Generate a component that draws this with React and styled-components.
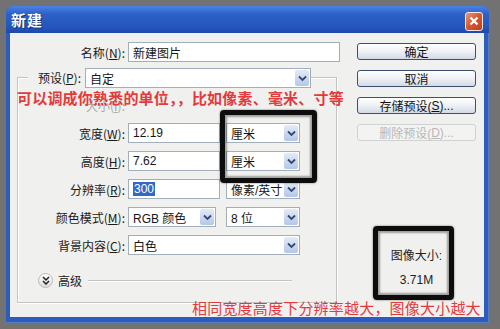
import React from "react";
import styled, { createGlobalStyle } from "styled-components";

const GlobalStyle = createGlobalStyle`
  html, body {
    margin: 0;
    padding: 0;
    background: #727272;
  }
  body {
    width: 500px;
    height: 329px;
    overflow: hidden;
    font-family: "Liberation Sans", "Noto Sans CJK SC", sans-serif;
  }
`;

const Window = styled.div`
  margin: 6px 0 0 6px;
  width: 483px;
  height: 317px;
  border-radius: 7px 7px 0 0;
  background: #2d5cc1;
  display: flex;
  flex-direction: column;
  overflow: hidden;
  box-shadow: inset -1px 0 0 #5b7cba, inset 0 -1px 0 #5b7cba;
`;

const TitleBar = styled.div`
  height: 27px;
  flex: none;
  display: flex;
  align-items: center;
  justify-content: space-between;
  padding: 0 6px 0 5px;
  background: linear-gradient(#4b82e2, #2d60c8 30%, #2455bd 80%, #1d48aa);
`;

const Title = styled.span`
  color: #fff;
  font-size: 15px;
  font-weight: bold;
  font-family: "Noto Sans CJK SC", sans-serif;
  text-shadow: 1px 1px 0 #10306e;
  letter-spacing: 1px;
`;

const Close = styled.div`
  width: 18px;
  height: 19px;
  margin-top: 3px;
  box-sizing: border-box;
  border: 1px solid #f4e6e0;
  border-radius: 3px;
  background: linear-gradient(135deg, #eb9677, #d5562f 50%, #bf3f1c);
  display: flex;
  align-items: center;
  justify-content: center;
`;

const Client = styled.div`
  position: relative;
  flex: 1;
  margin: 0 5px 6px 4px;
  background: #f0f0ef;
  display: flex;
  padding-top: 9px;
  box-sizing: border-box;
`;

const LeftCol = styled.div`
  width: 330px;
  display: flex;
  flex-direction: column;
`;

const RightCol = styled.div`
  width: 119px;
  margin-left: 17px;
  padding-top: 1px;
  display: flex;
  flex-direction: column;
  gap: 10px;
`;

const Row = styled.div`
  display: flex;
  align-items: center;
  height: 20px;
  margin-top: ${p => p.$mt || 0}px;
`;

const Label = styled.span`
  width: ${p => p.$w}px;
  flex: none;
  text-align: right;
  font-size: 12px;
  color: ${p => (p.$dim ? "#a8a8a8" : "#1a1a1a")};
  margin-right: 3px;
  white-space: nowrap;
  font-family: "Noto Sans CJK SC", sans-serif;
`;

const Field = styled.div`
  width: ${p => p.$w}px;
  height: 20px;
  flex: none;
  box-sizing: border-box;
  border: 1px solid #a3aebb;
  background: #fff;
  display: flex;
  align-items: center;
  padding-left: 4px;
  margin-left: ${p => p.$ml || 0}px;
  font-size: 12px;
  color: #151515;
  white-space: nowrap;
`;

const Arrow = styled.span`
  margin-left: auto;
  align-self: stretch;
  width: 14px;
  margin: 1px 1px 1px auto;
  border-radius: 2px;
  background: linear-gradient(#e3ebf8, #b4c7e8);
  display: flex;
  align-items: center;
  justify-content: center;
`;

const Selected = styled.span`
  background: #3169c6;
  color: #fff;
  padding: 0 1px;
`;

const GroupBox = styled.div`
  margin: 15px 0 0 7px;
  width: 320px;
  height: 226px;
  box-sizing: border-box;
  border: 1px solid #c4c4c2;
  box-shadow: inset 1px 1px 0 #fff, 1px 1px 0 #fff;
  display: flex;
  flex-direction: column;
`;

const PresetRow = styled.div`
  display: flex;
  align-items: center;
  height: 20px;
  margin: -10px 0 0 10px;
`;

const PresetLabel = styled.span`
  width: 57px;
  box-sizing: border-box;
  padding-right: 4px;
  text-align: right;
  background: #f0f0ef;
  font-size: 12px;
  color: #1a1a1a;
  font-family: "Noto Sans CJK SC", sans-serif;
  line-height: 20px;
`;

const AdvancedRow = styled.div`
  display: flex;
  align-items: center;
  height: 18px;
  margin-top: 16px;
  padding: 0 44px 0 20px;
  font-size: 12px;
  color: #1a1a1a;
  font-family: "Noto Sans CJK SC", sans-serif;
`;

const RoundButton = styled.span`
  width: 15px;
  height: 15px;
  border-radius: 50%;
  box-sizing: border-box;
  border: 1px solid #b9b9b9;
  background: linear-gradient(#ffffff, #dcdcdc);
  display: flex;
  align-items: center;
  justify-content: center;
  margin-right: 5px;
`;

const Rule = styled.span`
  flex: 1;
  height: 1px;
  margin-left: 6px;
  background: #c4c4c2;
  box-shadow: 0 1px 0 #fff;
`;

const Button = styled.div`
  height: 17px;
  box-sizing: border-box;
  border: 1px solid ${p => (p.$disabled ? "#cfd1d3" : "#3d4f6d")};
  border-radius: 3px;
  background: ${p =>
    p.$disabled ? "#f3f3f1" : "linear-gradient(#ffffff, #f0f2f6 45%, #d3dae6)"};
  color: ${p => (p.$disabled ? "#b8b8b8" : "#111")};
  font-size: 12px;
  display: flex;
  align-items: center;
  justify-content: center;
  font-family: "Liberation Sans", "Noto Sans CJK SC", sans-serif;
`;

const SizeInfo = styled.div`
  margin-top: 97px;
  display: flex;
  flex-direction: column;
  align-items: center;
  gap: 8px;
  font-size: 12px;
  line-height: 16px;
  color: #222;
`;

const Note = styled.div`
  position: absolute;
  left: ${p => p.$x}px;
  top: ${p => p.$y}px;
  font-size: 15px;
  line-height: 16px;
  font-weight: ${p => (p.$bold ? "bold" : "normal")};
  color: #e43a3c;
  white-space: nowrap;
  font-family: "Noto Sans CJK SC", sans-serif;
  letter-spacing: 0.2px;
`;

const Highlight = styled.div`
  position: absolute;
  left: ${p => p.$x}px;
  top: ${p => p.$y}px;
  width: ${p => p.$w}px;
  height: ${p => p.$h}px;
  box-sizing: border-box;
  border: 5px solid #0d0d0d;
  border-radius: 4px;
  box-shadow: inset 0 0 2px 2px rgba(0, 0, 0, 0.35), 0 0 2px rgba(0, 0, 0, 0.6);
`;

const Chevron = () => (
  <svg width="9" height="7" viewBox="0 0 9 7">
    <path d="M1 1.5 L4.5 5 L8 1.5" fill="none" stroke="#33496f" strokeWidth="1.8" />
  </svg>
);

const DoubleChevron = () => (
  <svg width="8" height="9" viewBox="0 0 8 9">
    <path d="M1 1 L4 4 L7 1 M1 5 L4 8 L7 5" fill="none" stroke="#222" strokeWidth="1.5" />
  </svg>
);

const Select = ({ w, ml, children }) => (
  <Field $w={w} $ml={ml}>
    {children}
    <Arrow>
      <Chevron />
    </Arrow>
  </Field>
);

const App = () => (
  <>
    <GlobalStyle />
    <Window>
      <TitleBar>
        <Title>新建</Title>
        <Close>
          <svg width="10" height="10" viewBox="0 0 10 10">
            <path d="M1.5 1.5 L8.5 8.5 M8.5 1.5 L1.5 8.5" stroke="#fff" strokeWidth="2.2" />
          </svg>
        </Close>
      </TitleBar>
      <Client>
        <LeftCol>
          <Row>
            <Label $w={115}>名称(<u>N</u>):</Label>
            <Field $w={212}>新建图片</Field>
          </Row>
          <GroupBox>
            <PresetRow>
              <PresetLabel>预设(<u>P</u>):</PresetLabel>
              <Select w={226}>自定</Select>
            </PresetRow>
            <Row $mt={7}>
              <Label $w={107} $dim>大小(<u>I</u>):</Label>
            </Row>
            <Row $mt={8}>
              <Label $w={107}>宽度(<u>W</u>):</Label>
              <Field $w={92}>12.19</Field>
              <Select w={74} ml={6}>厘米</Select>
            </Row>
            <Row $mt={8}>
              <Label $w={107}>高度(<u>H</u>):</Label>
              <Field $w={92}>7.62</Field>
              <Select w={74} ml={6}>厘米</Select>
            </Row>
            <Row $mt={8}>
              <Label $w={107}>分辨率(<u>R</u>):</Label>
              <Field $w={92}><Selected>300</Selected></Field>
              <Select w={74} ml={6}>像素/英寸</Select>
            </Row>
            <Row $mt={8}>
              <Label $w={107}>颜色模式(<u>M</u>):</Label>
              <Select w={88}>RGB 颜色</Select>
              <Select w={74} ml={10}>8 位</Select>
            </Row>
            <Row $mt={8}>
              <Label $w={107}>背景内容(<u>C</u>):</Label>
              <Select w={172}>白色</Select>
            </Row>
            <AdvancedRow>
              <RoundButton>
                <DoubleChevron />
              </RoundButton>
              高级
              <Rule />
            </AdvancedRow>
          </GroupBox>
        </LeftCol>
        <RightCol>
          <Button>确定</Button>
          <Button>取消</Button>
          <Button>存储预设(<u>S</u>)...</Button>
          <Button $disabled>删除预设(<u>D</u>)...</Button>
          <SizeInfo>
            <span>图像大小:</span>
            <span>3.71M</span>
          </SizeInfo>
        </RightCol>

        <Highlight $x={210} $y={77} $w={97} $h={73} />
        <Highlight $x={363} $y={193} $w={81} $h={74} />
        <Note $x={7} $y={57} $bold>可以调成你熟悉的单位，，比如像素、毫米、寸等</Note>
        <Note $x={182} $y={267}>相同宽度高度下分辨率越大，图像大小越大</Note>
      </Client>
    </Window>
  </>
);

export default App;
